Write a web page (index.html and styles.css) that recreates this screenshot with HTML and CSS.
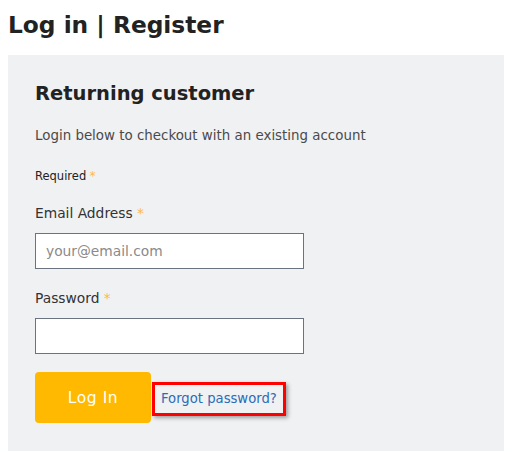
FILE: index.html
```html
<!DOCTYPE html>
<html lang="en">

<head>
    <meta charset="UTF-8">
    <meta name="viewport" content="width=device-width, initial-scale=1.0">
    <title>Log in | Register</title>
    <link rel="stylesheet" href="styles.css">
</head>

<body>
    <h1 class="page-title">Log in | Register</h1>

    <div class="login-box">
        <h2 class="box-title">Returning customer</h2>
        <p class="intro-text">Login below to checkout with an existing account</p>
        <p class="required-note">Required <span class="star">*</span></p>

        <form class="login-form">
            <label class="field-label" for="email">Email Address <span class="star">*</span></label>
            <input type="email" id="email" class="text-input" placeholder="your@email.com">

            <label class="field-label" for="password">Password <span class="star">*</span></label>
            <input type="password" id="password" class="text-input">

            <div class="actions">
                <button type="submit" class="login-btn">Log In</button>
                <a href="#" class="forgot-link">Forgot password?</a>
            </div>
        </form>
    </div>
</body>
</html>
```

FILE: styles.css
```css
* {
    margin: 0;
    padding: 0;
    box-sizing: border-box;
    font-family: "DejaVu Sans", Verdana, sans-serif;
}

body {
    background-color: white;
    color: #222;
    padding: 8px;
}

.page-title {
    font-size: 23.3px;
    font-weight: bold;
    line-height: 34px;
    margin-bottom: 13px;
}

.login-box {
    background-color: #f0f1f3;
    padding: 24px 27px 28px 27px;
    width: 496px;
}

.box-title {
    font-size: 19.5px;
    font-weight: bold;
    line-height: 30px;
    margin-bottom: 18px;
}

.intro-text {
    font-size: 13.4px;
    color: #4a4a4a;
    line-height: 18px;
    margin-bottom: 23px;
}

.required-note {
    font-size: 11.5px;
    color: #222;
    line-height: 16px;
    margin-bottom: 20px;
}

.star {
    color: #ffb74a;
}

.login-form {
    display: flex;
    flex-direction: column;
    align-items: flex-start;
}

.field-label {
    font-size: 13.8px;
    color: #333;
    line-height: 18px;
    margin-bottom: 11px;
}

.text-input {
    width: 269px;
    height: 36px;
    border: 1px solid #6b7280;
    background-color: white;
    padding: 0 10px;
    font-size: 13.8px;
    color: #333;
    margin-bottom: 20px;
    outline: none;
}

.text-input::placeholder {
    color: #8a8a8a;
}

.actions {
    display: flex;
    align-items: center;
    gap: 1px;
    margin-top: -2px;
}

.login-btn {
    width: 116px;
    height: 51px;
    background-color: #ffb900;
    color: white;
    border: none;
    border-radius: 4px;
    font-size: 15.5px;
    letter-spacing: 0.6px;
    cursor: pointer;
}

.forgot-link {
    color: #2b6cb8;
    text-decoration: none;
    font-size: 13.2px;
    padding: 6px 6px 7px 6px;
    border: 3px solid #ff0000;
    box-shadow: 2px 2px 4px rgba(0, 0, 0, 0.35);
    margin-top: 3px;
}
```
